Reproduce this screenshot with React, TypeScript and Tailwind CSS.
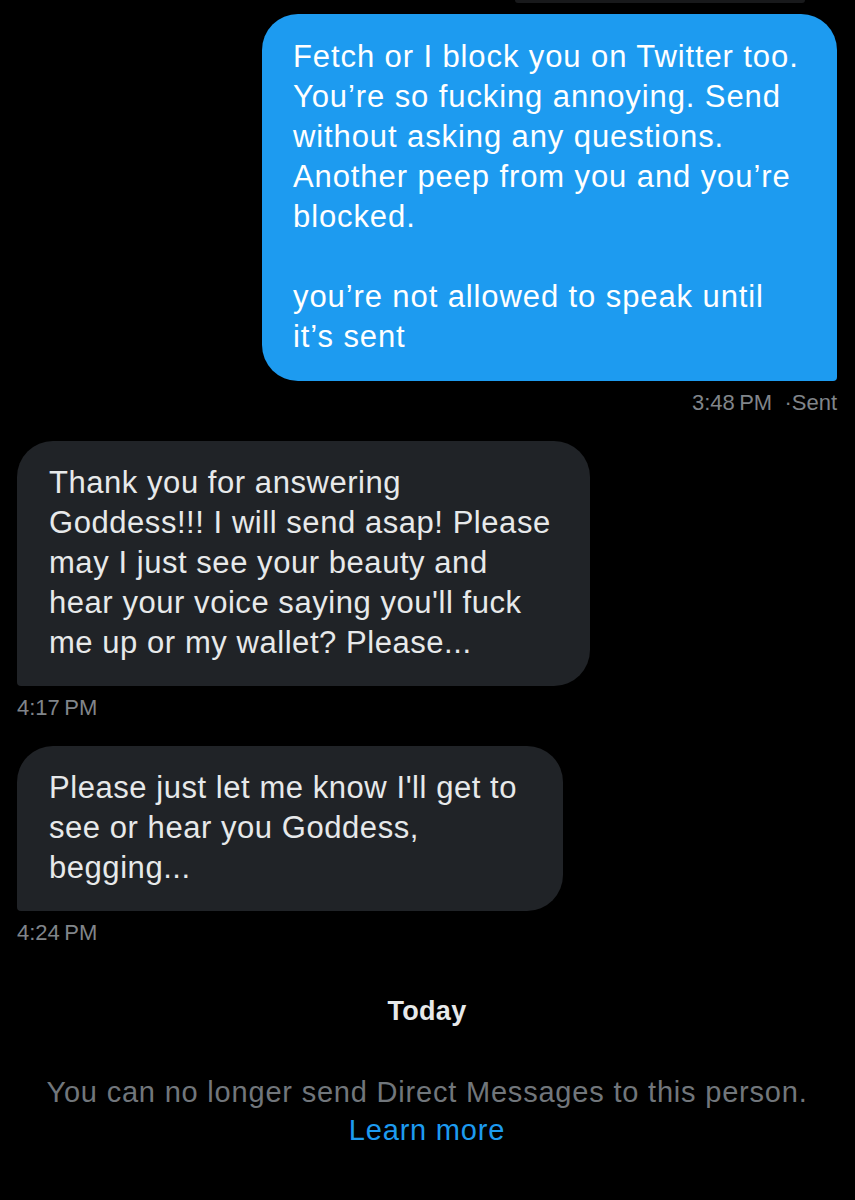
import React from "react";

const font = { fontFamily: '"Liberation Sans", Arial, sans-serif' };

function Lines({ lines }: { lines: string[] }) {
  return (
    <>
      {lines.map((l, i) => (
        <div key={i} className="whitespace-nowrap h-[40px]">
          {l}
        </div>
      ))}
    </>
  );
}

export default function App() {
  return (
    <div
      className="min-h-[1200px] w-[855px] bg-black text-white pl-[17px] pr-[18px]"
      style={font}
    >
      <div className="ml-[498px] w-[290px] h-[3px] rounded-b-full bg-[#18191b]" />
      <div className="mt-[11px] flex flex-col items-end">
        <div className="w-[575px] bg-[#1d9bf0] rounded-tl-[36px] rounded-tr-[36px] rounded-bl-[36px] rounded-br-[4px] pl-[31px] pr-[20px] pt-[23px] pb-[24px] text-[31px] leading-[40px] tracking-[0.9px] text-white">
          <Lines
            lines={[
              "Fetch or I block you on Twitter too.",
              "You’re so fucking annoying. Send",
              "without asking any questions.",
              "Another peep from you and you’re",
              "blocked.",
              "",
              "you’re not allowed to speak until",
              "it’s sent",
            ]}
          />
        </div>
        <div className="mt-[8px] text-[22px] leading-[28px] text-[#80858a]">
          3:48&#8201;PM&nbsp;&nbsp;·Sent
        </div>
      </div>

      <div className="mt-[24px] flex flex-col items-start">
        <div className="w-[573px] bg-[#202327] rounded-tl-[36px] rounded-tr-[36px] rounded-br-[36px] rounded-bl-[4px] pl-[32px] pr-[20px] pt-[22px] pb-[23px] text-[31px] leading-[40px] tracking-[0.55px] text-[#e7e9ea]">
          <Lines
            lines={[
              "Thank you for answering",
              "Goddess!!! I will send asap! Please",
              "may I just see your beauty and",
              "hear your voice saying you'll fuck",
              "me up or my wallet? Please...",
            ]}
          />
        </div>
        <div className="mt-[8px] text-[22px] leading-[28px] text-[#80858a]">
          4:17&#8201;PM
        </div>
      </div>

      <div className="mt-[24px] flex flex-col items-start">
        <div className="w-[546px] bg-[#202327] rounded-tl-[36px] rounded-tr-[36px] rounded-br-[36px] rounded-bl-[4px] pl-[32px] pr-[20px] pt-[22px] pb-[23px] text-[31px] leading-[40px] tracking-[0.55px] text-[#e7e9ea]">
          <Lines
            lines={[
              "Please just let me know I'll get to",
              "see or hear you Goddess,",
              "begging...",
            ]}
          />
        </div>
        <div className="mt-[8px] text-[22px] leading-[28px] text-[#80858a]">
          4:24&#8201;PM
        </div>
      </div>

      <div className="mt-[47px] text-center text-[27px] leading-[34px] tracking-[0.3px] font-bold text-[#e7e9ea]">
        Today
      </div>

      <div className="mt-[45px] text-center text-[29px] leading-[38px] text-[#71767b] tracking-[0.8px]">
        <div className="whitespace-nowrap">You can no longer send Direct Messages to this person.</div>
        <div className="text-[#1d9bf0]">Learn more</div>
      </div>
    </div>
  );
}
